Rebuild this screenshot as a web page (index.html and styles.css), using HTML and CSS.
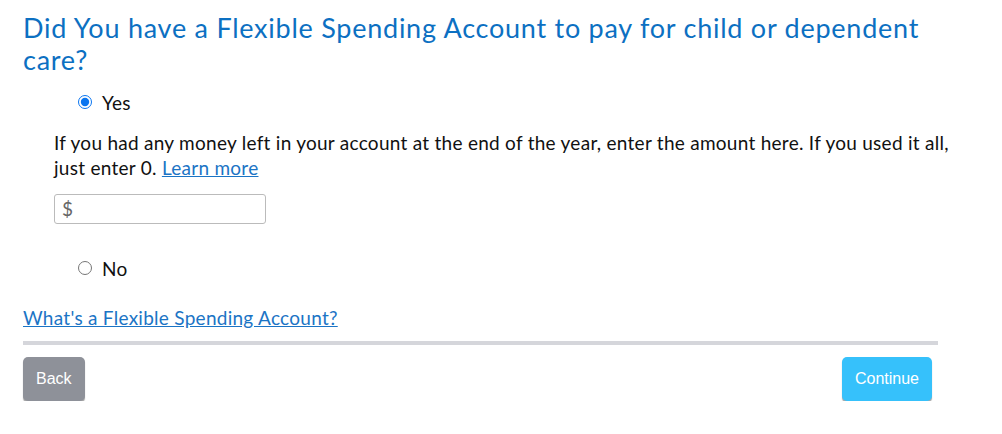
FILE: index.html
```html
<!DOCTYPE html>
<html>
<head>
<meta charset="utf-8">
<link rel="stylesheet" href="styles.css">
</head>
<body>
<div class="page">
  <h1 class="title">Did You have a Flexible Spending Account to pay for child or dependent care?</h1>
  <div class="option">
    <label class="radio-row"><input type="radio" name="fsa" checked><span>Yes</span></label>
    <div class="details">
      <p class="hint">If you had any money left in your account at the end of the year, enter the amount here. If you used it all, just enter 0. <a href="#" class="link">Learn more</a></p>
      <div class="amount"><span class="dollar">$</span><input type="text" class="amount-input"></div>
    </div>
  </div>
  <div class="option no">
    <label class="radio-row"><input type="radio" name="fsa"><span>No</span></label>
  </div>
  <a href="#" class="link what">What's a Flexible Spending Account?</a>
  <div class="footer">
    <div class="divider"></div>
    <div class="actions">
      <button class="btn back">Back</button>
      <button class="btn continue">Continue</button>
    </div>
  </div>
</div>
</body>
</html>
```
FILE: styles.css
```css
html, body { margin: 0; padding: 0; background: #fff; }
body { font-family: "Lato", "Noto Sans", sans-serif; color: #111; }
.page { width: 927px; padding: 12px 0 0 23px; }
.title {
  margin: 0;
  font-size: 27px;
  line-height: 32px;
  font-weight: 400;
  letter-spacing: 0.75px;
  color: #0c70c2;
}
.option { margin-top: 14px; }
.radio-row { display: flex; align-items: center; padding-left: 55px; font-size: 19px; letter-spacing: 0.27px; height: 24px; }
.radio-row input { margin: 0 10px 0 0; width: 14px; height: 14px; accent-color: #0a75f0; }
.details { padding-left: 31px; }
.hint { margin: 16px 0 0; font-size: 19px; line-height: 25px; letter-spacing: 0.27px; }
.link { color: #1b74c5; text-decoration: underline; }
.amount { position: relative; width: 212px; margin-top: 14px; }
.dollar { position: absolute; left: 8px; top: 3px; font-size: 19px; color: #666; }
.amount-input { box-sizing: border-box; width: 212px; height: 30px; border: 1px solid #bbb; border-radius: 3px; padding-left: 22px; font-size: 16px; }
.option.no { margin-top: 32px; }
.what { display: inline-block; margin-top: 26px; font-size: 19px; line-height: 24px; letter-spacing: 0.27px; }
.footer { width: 915px; }
.divider { height: 4px; background: #d5d6db; margin-top: 11px; }
.actions { display: flex; justify-content: space-between; margin-top: 12px; padding-right: 6px; }
.btn { font-family: "Liberation Sans", Arial, sans-serif; font-size: 16px; color: #fff; border: none; border-radius: 5px; height: 44px; padding: 0 13px; box-shadow: 0 2px 1px #a8a8a8; }
.back { background: #8e9199; }
.continue { background: #36c1fb; }
```
